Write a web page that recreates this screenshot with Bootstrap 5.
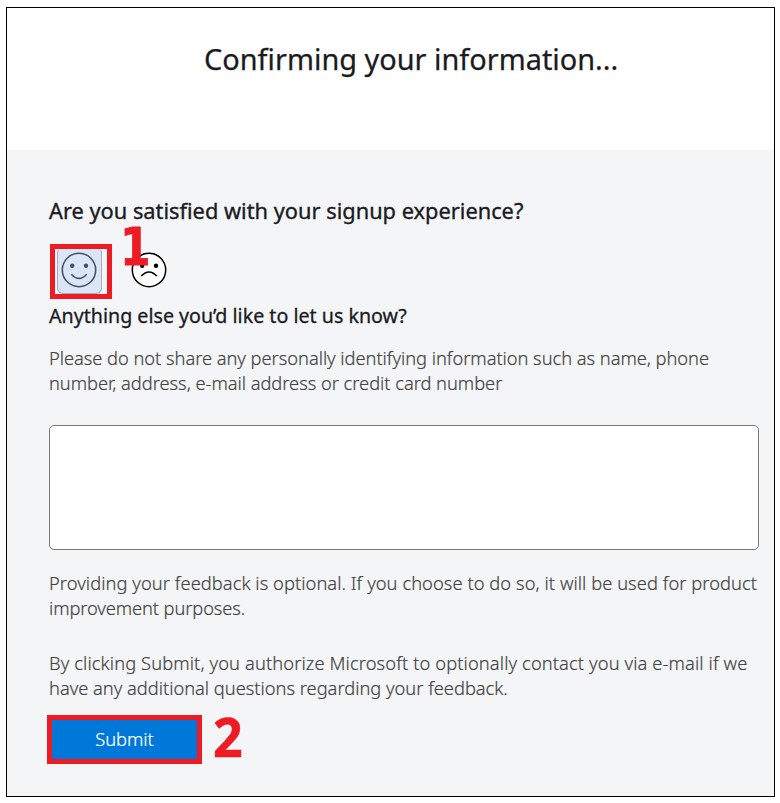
<!DOCTYPE html>
<html lang="en">
<head>
<meta charset="utf-8">
<meta name="viewport" content="width=device-width, initial-scale=1">
<title>Confirming your information</title>
<link href="https://cdn.jsdelivr.net/npm/bootstrap@5.3.0/dist/css/bootstrap.min.css" rel="stylesheet">
<style>
body{font-family:"Noto Sans",sans-serif;color:#1b1b1f;padding:7px 5px 6px 6px;background:#fff}
.frame{height:790px;border:1px solid #000}
.top-panel{height:142px;padding:31px 0 0 197px}
.top-panel h1{font-size:28.9px;font-weight:400;line-height:40px;white-space:nowrap;-webkit-text-stroke:.25px}
.survey{background:#f3f5f7;padding:46px 15px 0 42px}
.survey h2{font-size:21.8px;font-weight:400;line-height:30px;white-space:nowrap;-webkit-text-stroke:.35px}
.survey h3{font-size:19.65px;font-weight:400;line-height:26px;margin-top:4px;white-space:nowrap;-webkit-text-stroke:.3px}
.faces{margin:18px 0 0 1px;height:55px;gap:19px}
.marked{width:62px;height:55px;border:5px solid #ed1c24;background:#f3f5f7;padding:0 6px 5px 2px}
.face-btn{width:45px;height:45px;background:#dae6f8;border:1.5px solid #9cadc4;border-top:0;border-radius:4px 4px 6px 6px;padding:0 2px 0 0;color:#47515f}
.face-btn svg,.sad svg{display:block;overflow:visible;flex:none}
.face-btn svg{margin-top:3px}
.sad{width:36px;height:36px;margin-top:8px;color:#000;position:relative}
.step{color:#ed1c24;font-weight:700;line-height:1}
.step-one{font:700 52px/52px "DejaVu Sans Condensed","DejaVu Sans",sans-serif;position:absolute;left:-11px;top:-31px;-webkit-text-stroke:.8px;transform:scaleX(.94);transform-origin:left}
.step-two{font-size:54px;line-height:54px;transform:scaleX(.96);transform-origin:left;margin:-8px 0 0 11px;-webkit-text-stroke:.6px}
.note{font-size:18.3px;font-weight:300;line-height:25px;color:#444;-webkit-text-stroke:.2px;margin:16px 0 0}
.note span{display:block;white-space:nowrap}
.note.privacy{margin-top:20px}
.note.consent{margin-top:30px}
.a{letter-spacing:-.035px}.b{letter-spacing:-.03px}.c{letter-spacing:.06px}.d{letter-spacing:-.1px}.e{letter-spacing:.115px}.f{letter-spacing:-.01px}
.comment{display:block;width:710px;height:125px;border:1px solid #767676;border-radius:5px;resize:none;margin-top:30px}
.send,.send:hover{width:155px;height:49px;border:5px solid #ed1c24;border-radius:0;background:#0078d9;color:#fff;font-size:18.3px;font-weight:300;padding:0 0 2px;line-height:37px;-webkit-text-stroke:.2px}
.send-row{margin:15px 0 0 -2px;height:49px}
</style>
</head>
<body>
<main class="frame d-flex flex-column">
  <header class="top-panel"><h1 class="m-0">Confirming your information...</h1></header>
  <section class="survey flex-grow-1">
    <h2 class="mb-0">Are you satisfied with your signup experience?</h2>
    <div class="faces d-flex align-items-start">
      <div class="marked">
        <button class="face-btn d-flex justify-content-center" type="button" aria-label="Satisfied">
          <svg width="36" height="36" viewBox="0 0 36 36" fill="none" stroke="currentColor" stroke-width="1.6"><circle cx="18" cy="18" r="16.7"/><path d="M10.3 22.2Q18 30.6 25.7 22.2"/><g fill="currentColor" stroke="none"><circle cx="11.2" cy="13.7" r="2.2"/><circle cx="25" cy="13.7" r="2.2"/></g></svg>
        </button>
      </div>
      <div class="sad">
        <svg width="36" height="36" viewBox="0 0 36 36" fill="none" stroke="currentColor" stroke-width="1.5"><circle cx="18" cy="18" r="16.7" fill="#fff"/><path d="M10.2 24Q18 15.8 25.8 24"/><g fill="currentColor" stroke="none"><circle cx="11.2" cy="13.7" r="2.2"/><circle cx="25" cy="13.7" r="2.2"/></g></svg>
        <span class="step step-one">1</span>
      </div>
    </div>
    <h3 class="mb-0">Anything else you’d like to let us know?</h3>
    <p class="note"><span class="a">Please do not share any personally identifying information such as name, phone</span><span class="b">number, address, e-mail address or credit card number</span></p>
    <textarea class="comment" aria-label="Feedback"></textarea>
    <p class="note privacy"><span class="c">Providing your feedback is optional. If you choose to do so, it will be used for product</span><span class="d">improvement purposes.</span></p>
    <p class="note consent"><span class="e">By clicking Submit, you authorize Microsoft to optionally contact you via e-mail if we</span><span class="f">have any additional questions regarding your feedback.</span></p>
    <div class="send-row d-flex align-items-center">
      <button class="btn send" type="button">Submit</button>
      <span class="step step-two">2</span>
    </div>
  </section>
</main>
<script src="https://cdn.jsdelivr.net/npm/bootstrap@5.3.0/dist/js/bootstrap.bundle.min.js"></script>
</body>
</html>
